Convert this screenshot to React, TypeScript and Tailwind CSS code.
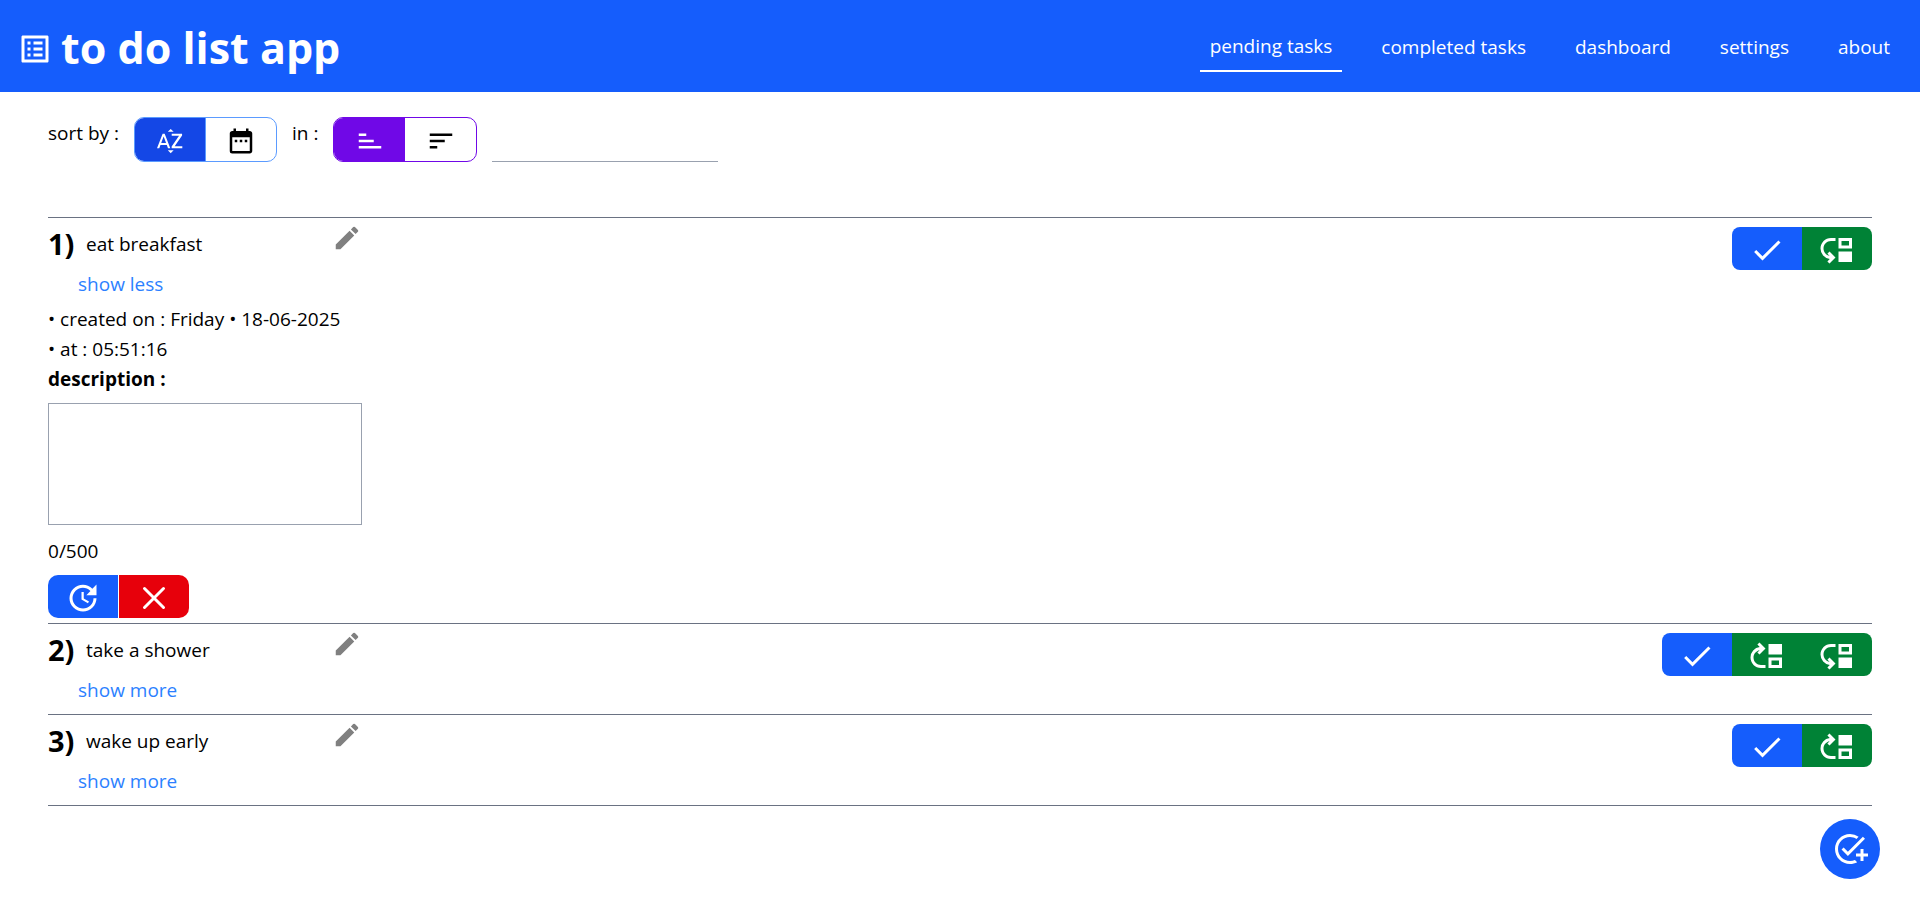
import { useState } from "react";
import type { ReactNode } from "react";
import {
  MdAddTask,
  MdCheck,
  MdDateRange,
  MdEdit,
  MdListAlt,
  MdMoveDown,
  MdMoveUp,
  MdSort,
  MdSortByAlpha,
  MdUpdate,
} from "react-icons/md";

type Task = {
  id: number;
  title: string;
  day: string;
  date: string;
  time: string;
  description: string;
};

const links = ["pending tasks", "completed tasks", "dashboard", "settings", "about"];

const initialTasks: Task[] = [
  { id: 1, title: "eat breakfast", day: "Friday", date: "18-06-2025", time: "05:51:16", description: "" },
  { id: 2, title: "take a shower", day: "Friday", date: "18-06-2025", time: "05:51:08", description: "" },
  { id: 3, title: "wake up early", day: "Friday", date: "18-06-2025", time: "05:50:59", description: "" },
];

export default function App() {
  const [openId, setOpenId] = useState<number | null>(1);

  return (
    <div className="bg-white font-['Open_Sans','Noto_Sans',sans-serif] text-[19px] leading-[30px] text-black">
      <Header />
      <main className="px-12 pt-[25px]">
        <SortBar />
        <ul className="mt-[55px] border-t border-gray-500">
          {initialTasks.map((task, index) => (
            <TaskRow
              key={task.id}
              task={task}
              index={index}
              total={initialTasks.length}
              open={openId === task.id}
              toggle={() => setOpenId(openId === task.id ? null : task.id)}
            />
          ))}
        </ul>
      </main>
      <button
        type="button"
        aria-label="add task"
        className="fixed right-10 bottom-[39px] flex h-[60px] w-[60px] cursor-pointer items-center justify-center rounded-full bg-blue-600 text-white"
      >
        <MdAddTask size={36} />
      </button>
    </div>
  );
}

function Header() {
  return (
    <header className="flex h-[92px] items-center justify-between bg-blue-600 pr-5 pl-[17px] text-white">
      <div className="flex items-center gap-2 pt-1">
        <MdListAlt size={36} className="mt-[2px]" />
        <h1 className="text-[43px] leading-[60px] font-bold">to do list app</h1>
      </div>
      <nav className="flex items-center gap-[29px] pt-[2px]">
        {links.map((link) => (
          <a
            key={link}
            href="#"
            className={
              link === "pending tasks"
                ? "border-b-2 border-white px-[10px] pt-2 pb-[9px]"
                : "px-[10px] py-2"
            }
          >
            {link}
          </a>
        ))}
      </nav>
    </header>
  );
}

function SortBar() {
  return (
    <div className="flex h-[45px] items-start gap-[15px]">
      <span className="pt-px">sort by :</span>
      <div className="flex h-full w-[143px] overflow-hidden rounded-[10px] border border-[#5b9bff]">
        <button type="button" aria-label="name" className="flex flex-1 items-center justify-center bg-blue-700 pt-[2px] text-white">
          <MdSortByAlpha size={30} />
        </button>
        <button type="button" aria-label="date" className="flex flex-1 items-center justify-center border-l border-[#5b9bff] pt-[2px]">
          <MdDateRange size={30} />
        </button>
      </div>
      <span className="pt-px">in :</span>
      <div className="flex h-full w-[144px] overflow-hidden rounded-[10px] border border-violet-700">
        <button type="button" aria-label="ascending" className="flex flex-1 items-center justify-center bg-violet-700 pt-[2px] text-white">
          <MdSort size={30} className="-scale-y-100" />
        </button>
        <button type="button" aria-label="descending" className="flex flex-1 items-center justify-center pt-[2px]">
          <MdSort size={30} />
        </button>
      </div>
      <input type="text" aria-label="search" className="h-full w-[226px] border-b border-gray-400 outline-none" />
    </div>
  );
}

function TaskRow({
  task,
  index,
  total,
  open,
  toggle,
}: {
  task: Task;
  index: number;
  total: number;
  open: boolean;
  toggle: () => void;
}) {
  return (
    <li className="flex items-start justify-between border-b border-gray-500">
      <div className={open ? "pb-[5px]" : "pb-[9px]"}>
        <div className="flex w-[314px] items-start">
          <span className="w-[38px] pt-[7px] text-[29px] leading-[38px] font-bold">{index + 1})</span>
          <span className="grow pt-[11px]">{task.title}</span>
          <button type="button" aria-label="edit" className="cursor-pointer pt-[5px] text-[#808080]">
            <MdEdit size={30} />
          </button>
        </div>
        <button type="button" onClick={toggle} className="mt-[6px] ml-[30px] block cursor-pointer text-blue-500">
          {open ? "show less" : "show more"}
        </button>
        {open && <TaskDetails task={task} />}
      </div>
      <div className="mt-[9px] flex overflow-hidden rounded-lg">
        <ActionButton label="done" color="bg-blue-600">
          <MdCheck size={36} />
        </ActionButton>
        {index > 0 && (
          <ActionButton label="move up" color="bg-green-700">
            <MdMoveUp size={36} />
          </ActionButton>
        )}
        {index < total - 1 && (
          <ActionButton label="move down" color="bg-green-700">
            <MdMoveDown size={36} />
          </ActionButton>
        )}
      </div>
    </li>
  );
}

function TaskDetails({ task }: { task: Task }) {
  const [text, setText] = useState(task.description);

  return (
    <div className="pt-[5px]">
      <p>
        • created on : {task.day} • {task.date}
      </p>
      <p>• at : {task.time}</p>
      <label htmlFor="description" className="block font-bold">
        description :
      </label>
      <textarea
        id="description"
        maxLength={500}
        value={text}
        onChange={(e) => setText(e.target.value)}
        className="mt-[9px] block h-[122px] w-[314px] resize-none border border-gray-400 p-2 outline-none"
      />
      <p className="mt-[11px]">{text.length}/500</p>
      <div className="mt-[9px] flex w-fit gap-px overflow-hidden rounded-[10px]">
        <ActionButton label="update" color="bg-blue-600">
          <MdUpdate size={36} />
        </ActionButton>
        <ActionButton label="cancel" color="bg-red-600">
          <CrossIcon />
        </ActionButton>
      </div>
    </div>
  );
}

function CrossIcon() {
  return (
    <svg width="36" height="36" viewBox="0 0 36 36" fill="none" stroke="currentColor" strokeWidth="3" strokeLinecap="round">
      <path d="M8.5 8.5 27.5 27.5M27.5 8.5 8.5 27.5" />
    </svg>
  );
}

function ActionButton({
  label,
  color,
  children,
}: {
  label: string;
  color: string;
  children: ReactNode;
}) {
  return (
    <button
      type="button"
      aria-label={label}
      className={`flex h-[43px] w-[70px] cursor-pointer items-center justify-center pt-[2px] text-white ${color}`}
    >
      {children}
    </button>
  );
}
